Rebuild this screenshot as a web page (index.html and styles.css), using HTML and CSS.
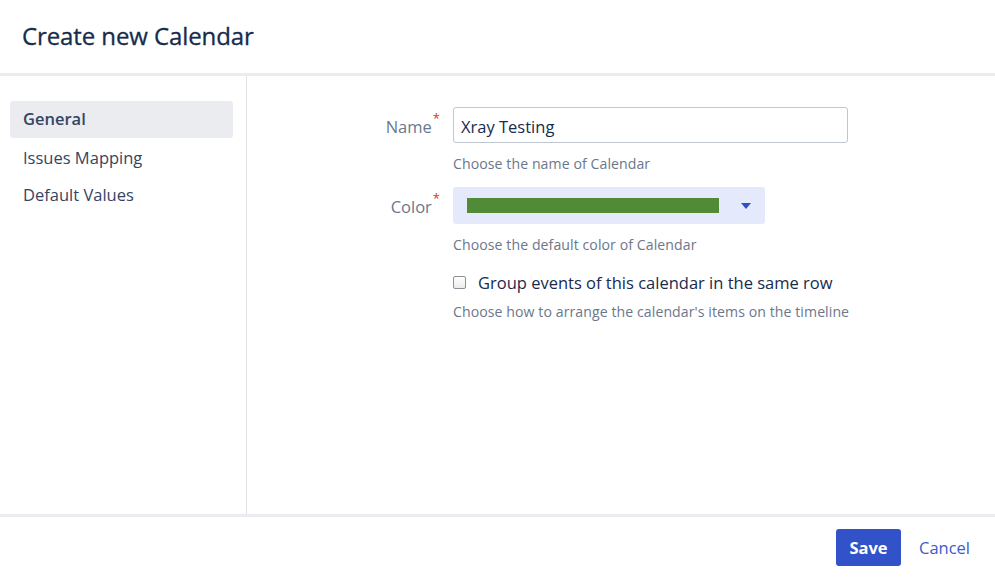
FILE: index.html
```html
<!DOCTYPE html>
<html>
<head>
<meta charset="utf-8">
<link rel="stylesheet" href="styles.css">
</head>
<body>
<div class="dialog">
  <header class="dlg-header">
    <h1 class="dlg-title">Create new Calendar</h1>
  </header>
  <div class="dlg-body">
    <nav class="sidebar">
      <div class="nav-item active">General</div>
      <div class="nav-item">Issues Mapping</div>
      <div class="nav-item">Default Values</div>
    </nav>
    <main class="content">
      <div class="field">
        <label class="field-label">Name<span class="req">*</span></label>
        <div class="field-main">
          <div class="text-input">Xray Testing</div>
          <div class="help">Choose the name of Calendar</div>
        </div>
      </div>
      <div class="field field-color">
        <label class="field-label">Color<span class="req">*</span></label>
        <div class="field-main">
          <div class="select">
            <span class="swatch"></span>
            <svg class="caret" width="10" height="6" viewBox="0 0 10 6"><path d="M0 0 L10 0 L5 6 Z" fill="#3050C8"/></svg>
          </div>
          <div class="help">Choose the default color of Calendar</div>
        </div>
      </div>
      <div class="field field-check">
        <div class="field-label"></div>
        <div class="field-main">
          <div class="check-row">
            <span class="checkbox"></span>
            <span class="check-label">Group events of this calendar in the same row</span>
          </div>
          <div class="help">Choose how to arrange the calendar's items on the timeline</div>
        </div>
      </div>
    </main>
  </div>
  <footer class="dlg-footer">
    <button class="btn-primary">Save</button>
    <a class="btn-link">Cancel</a>
  </footer>
</div>
</body>
</html>
```
FILE: styles.css
```css
* { box-sizing: border-box; }
html, body { margin: 0; padding: 0; background: #fff; }
body {
  font-family: "Open Sans", "Noto Sans", sans-serif;
  color: #172B4D;
  width: 995px;
  height: 577px;
  overflow: hidden;
}
.dialog { display: flex; flex-direction: column; height: 577px; }
.dlg-header {
  height: 76px;
  border-bottom: 3px solid #EBECF0;
  padding: 0 22px;
  display: flex;
  align-items: center;
}
.dlg-title {
  margin: 0;
  font-size: 24px;
  font-weight: 500;
  color: #172B4D;
  letter-spacing: -0.1px;
  position: relative;
  top: -1px;
  -webkit-text-stroke: 0.3px #172B4D;
}
.dlg-body { display: flex; flex: 1; }
.sidebar {
  width: 247px;
  border-right: 1px solid #DFE1E6;
  padding: 25px 13px 0 10px;
  display: flex;
  flex-direction: column;
}
.nav-item {
  height: 37px;
  line-height: 37px;
  padding: 0 13px;
  font-size: 16.5px;
  color: #344563;
  border-radius: 3px;
}
.nav-item + .nav-item { margin-top: 0.5px; }
.nav-item.active { background: #EBECF0; font-weight: 600; line-height: 36px; }
.content { flex: 1; padding-top: 31px; }
.field { display: flex; }
.field-label {
  width: 206px;
  text-align: right;
  padding-right: 13px;
  padding-top: 2px;
  font-size: 16.5px;
  color: #6B778C;
  line-height: 36px;
}
.req { color: #DE350B; font-size: 13px; vertical-align: top; position: relative; top: -9px; margin-left: 1px; }
.field-main { display: flex; flex-direction: column; }
.text-input {
  width: 395px;
  height: 36px;
  border: 1px solid #C1C7D0;
  border-radius: 3px;
  padding: 2px 7px 0;
  line-height: 34px;
  font-size: 16.5px;
  color: #172B4D;
}
.help { font-size: 14.1px; letter-spacing: 0.08px; color: #6B778C; line-height: 20px; margin-top: 11px; }
.field-color { margin-top: 13px; }
.select {
  width: 312px;
  height: 37px;
  background: #E4EAFC;
  border-radius: 3px;
  display: flex;
  align-items: center;
  padding-left: 14px;
}
.swatch { width: 252px; height: 15px; background: #518B38; }
.caret { margin-left: 22px; }
.field-check { margin-top: 15px; }
.check-row { display: flex; align-items: center; height: 24px; }
.checkbox {
  width: 13px; height: 13px;
  border: 1px solid #8A8F98;
  border-radius: 2px;
  background: linear-gradient(#fff, #ECECEC);
}
.check-label { margin-left: 12px; font-size: 16.5px; color: #172B4D; }
.field-check .help { margin-top: 8px; }
.dlg-footer {
  height: 63px;
  border-top: 3px solid #EBECF0;
  display: flex;
  align-items: center;
  justify-content: flex-end;
  padding-right: 25px;
  padding-top: 1px;
}
.btn-primary {
  width: 65px; height: 37px;
  background: #3152C8;
  color: #fff;
  border: 0;
  border-radius: 3px;
  font-family: inherit;
  font-size: 16.5px;
  font-weight: 700;
}
.btn-link { margin-left: 18px; font-size: 16.5px; color: #3D5BC9; }
```
